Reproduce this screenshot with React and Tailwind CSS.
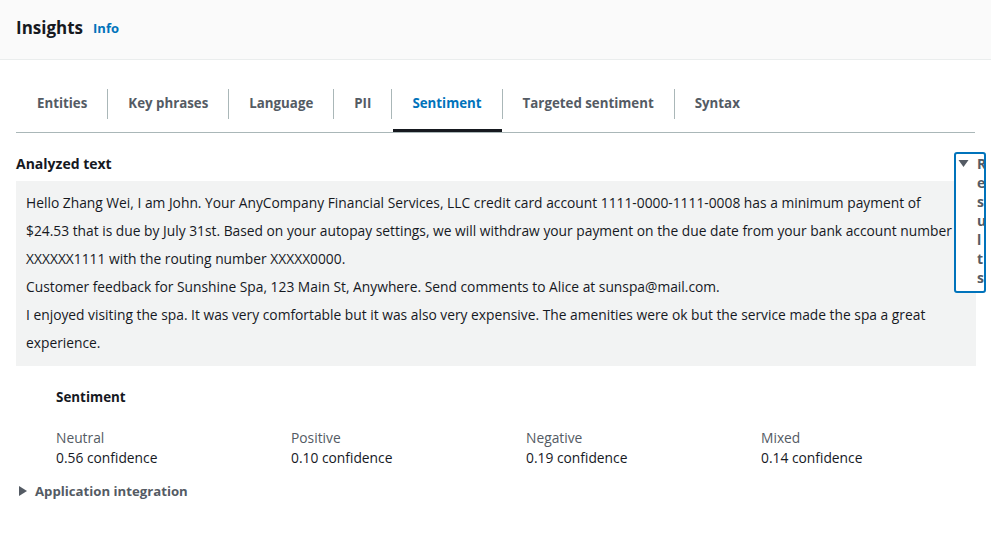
import { useState } from "react";

const tabs = ["Entities", "Key phrases", "Language", "PII", "Sentiment", "Targeted sentiment", "Syntax"];

const scores = [
  { label: "Neutral", value: "0.56" },
  { label: "Positive", value: "0.10" },
  { label: "Negative", value: "0.19" },
  { label: "Mixed", value: "0.14" },
];

export default function App() {
  const [active, setActive] = useState("Sentiment");

  return (
    <div className="min-h-screen bg-white text-[#16191f] font-['Open_Sans',sans-serif] overflow-hidden">
      {/* Header */}
      <div className="h-[60px] bg-[#fafafa] border-b border-[#eaeded] px-4 flex items-center">
        <h2 className="text-[17px] font-bold text-[#16191f] -mt-[4px]">Insights</h2>
        <a href="#" className="ml-[10px] text-[13px] font-bold text-[#0073bb] -mt-[1px]">Info</a>
      </div>

      <div className="pl-4 pt-px relative">
        {/* Tabs */}
        <div className="mt-[24px] mr-[16px] flex border-b border-[#aab7b8]">
          {tabs.map((t, i) => (
            <button
              key={t}
              onClick={() => setActive(t)}
              className="relative h-[47px] flex items-center pl-[21px] pr-[20px]"
            >
              {i > 0 && <span className="absolute left-0 top-[4px] h-[30px] w-px bg-[#aab7b8]" />}
              <span className={`text-[13.3px] font-bold -mt-[10px] ${active === t ? "text-[#0073bb]" : "text-[#545b64]"}`}>{t}</span>
              {active === t && <span className="absolute left-[2px] right-0 bottom-0 h-[3px] bg-[#16191f]" />}
            </button>
          ))}
        </div>

        {/* Analyzed text */}
        <div className="mr-[15px]">
          <div className="mt-[21px] text-[14px] font-bold leading-[20px]">Analyzed text</div>
          <div className="mt-[7px] bg-[#f2f3f3] pl-[10px] pr-[10px] pt-[8px] pb-[9px] text-[13.8px] leading-[28px]">
            <p>Hello Zhang Wei, I am John. Your AnyCompany Financial Services, LLC credit card account 1111-0000-1111-0008 has a minimum payment of $24.53 that is due by July 31st. Based on your autopay settings, we will withdraw your payment on the due date from your bank account number XXXXXX1111 with the routing number XXXXX0000.</p>
            <p>Customer feedback for Sunshine Spa, 123 Main St, Anywhere. Send comments to Alice at sunspa@mail.com.</p>
            <p>I enjoyed visiting the spa. It was very comfortable but it was also very expensive. The amenities were ok but the service made the spa a great experience.</p>
          </div>
        </div>

        {/* Results side panel */}
        <div className="absolute left-[954px] top-[92px] w-[32px] h-[141px] border-2 border-[#0073bb] rounded-[3px] bg-white flex pl-[2px] overflow-hidden">
          <svg width="11" height="20" viewBox="0 0 11 20" className="shrink-0">
            <path d="M0.5 6 L10.5 6 L5.5 13 Z" fill="#545b64" />
          </svg>
          <div className="ml-[8px] w-[10px] break-all text-[14px] font-bold leading-[19px] text-[#545b64]">Results</div>
        </div>

        {/* Sentiment */}
        <div className="pl-[40px] mt-[20px]">
          <div className="text-[13.4px] font-bold leading-[22px]">Sentiment</div>
          <div className="mt-[20px] grid grid-cols-4 w-[940px]">
            {scores.map((s) => (
              <div key={s.label} className="text-[13.8px] leading-[20px]">
                <div className="text-[#545b64]">{s.label}</div>
                <div>{s.value} confidence</div>
              </div>
            ))}
          </div>
        </div>

        {/* Application integration */}
        <div className="mt-[12px] flex items-center">
          <svg width="10" height="12" viewBox="0 0 10 12" className="ml-[2px]">
            <path d="M1 1 L9 6 L1 11 Z" fill="#545b64" />
          </svg>
          <span className="ml-[7px] text-[13.2px] font-bold leading-[22px] text-[#545b64]">Application integration</span>
        </div>
      </div>
    </div>
  );
}
